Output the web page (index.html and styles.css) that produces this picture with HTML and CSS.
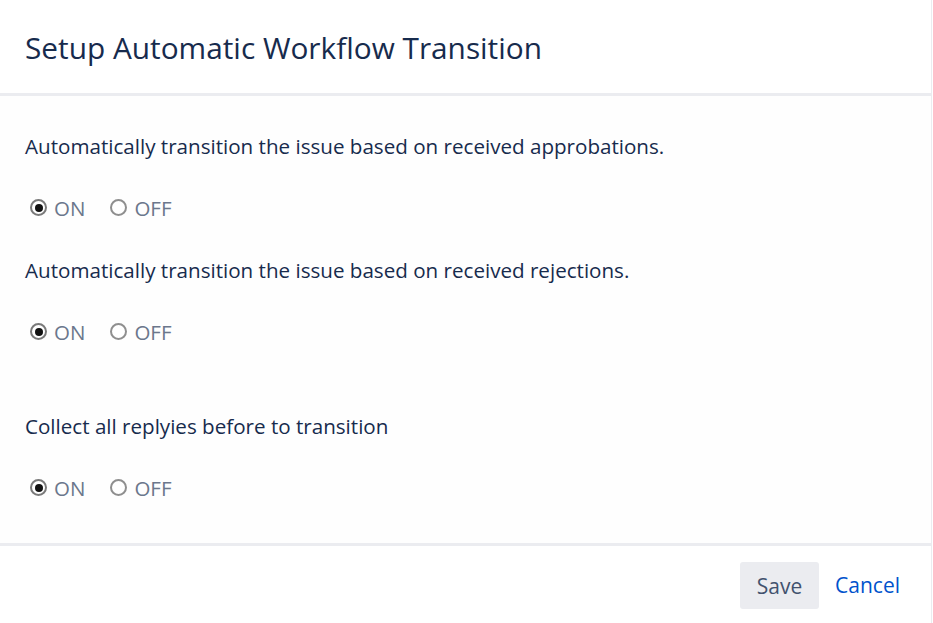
FILE: index.html
```html
<!DOCTYPE html>
<html>
<head>
<meta charset="utf-8">
<link rel="stylesheet" href="styles.css">
</head>
<body>
<div class="dialog">
  <header class="header">
    <h2 class="title">Setup Automatic Workflow Transition</h2>
  </header>
  <div class="content">
    <div class="field">
      <div class="label">Automatically transition the issue based on received approbations.</div>
      <div class="radios">
        <span class="radio"><span class="circle checked"></span>ON</span>
        <span class="radio"><span class="circle"></span>OFF</span>
      </div>
    </div>
    <div class="field">
      <div class="label">Automatically transition the issue based on received rejections.</div>
      <div class="radios">
        <span class="radio"><span class="circle checked"></span>ON</span>
        <span class="radio"><span class="circle"></span>OFF</span>
      </div>
    </div>
    <div class="field field-wide">
      <div class="label">Collect all replyies before to transition</div>
      <div class="radios">
        <span class="radio"><span class="circle checked"></span>ON</span>
        <span class="radio"><span class="circle"></span>OFF</span>
      </div>
    </div>
  </div>
  <footer class="footer">
    <button class="btn-save">Save</button>
    <a class="btn-cancel">Cancel</a>
  </footer>
</div>
</body>
</html>
```
FILE: styles.css
```css
html, body {
  margin: 0;
  padding: 0;
  background: #ffffff;
}
body {
  font-family: "Open Sans", "Noto Sans", sans-serif;
  color: #172b4d;
}
.dialog {
  width: 931px;
  height: 623px;
  border-right: 1px solid #ebecf0;
  display: flex;
  flex-direction: column;
}
.header {
  height: 93px;
  flex: none;
  border-bottom: 3px solid #ebecf0;
  display: flex;
  align-items: center;
  padding-left: 25px;
}
.title {
  margin: 0;
  font-weight: 400;
  font-size: 29.8px;
  color: #172b4d;
  padding-top: 2px;
}
.content {
  flex: none;
  padding: 36px 25px 0;
  height: 450px;
  box-sizing: border-box;
  border-bottom: 3px solid #ebecf0;
  background: #fefefe;
}
.field + .field {
  margin-top: 34px;
}
.field.field-wide {
  margin-top: 66px;
}
.label {
  height: 28px;
  line-height: 28px;
  font-size: 20.6px;
}
.radios {
  margin-top: 34px;
  height: 28px;
  display: flex;
  align-items: center;
  gap: 25px;
  padding-left: 5px;
}
.radio {
  display: flex;
  align-items: center;
  font-size: 20.5px;
  color: #6b778c;
}
.circle {
  width: 17px;
  height: 17px;
  border: 2px solid #8f8f8f;
  border-radius: 50%;
  box-sizing: border-box;
  margin-right: 7px;
  position: relative;
  background: #fff;
  margin-top: -1px;
}
.circle.checked {
  border-color: #7a7a7a;
}
.circle.checked::after {
  content: "";
  position: absolute;
  left: 2.5px;
  top: 2.5px;
  width: 8px;
  height: 8px;
  border-radius: 50%;
  background: #111;
}
.footer {
  flex: 1;
  display: flex;
  align-items: flex-start;
  justify-content: flex-end;
  padding: 16px 31px 0 0;
  gap: 16px;
}
.btn-save {
  width: 79px;
  height: 47px;
  border: none;
  border-radius: 3px;
  background: #ebecf0;
  color: #42526e;
  font-family: inherit;
  font-size: 21px;
  padding: 0;
}
.btn-cancel {
  color: #0052cc;
  font-size: 21px;
  line-height: 47px;
}
```
